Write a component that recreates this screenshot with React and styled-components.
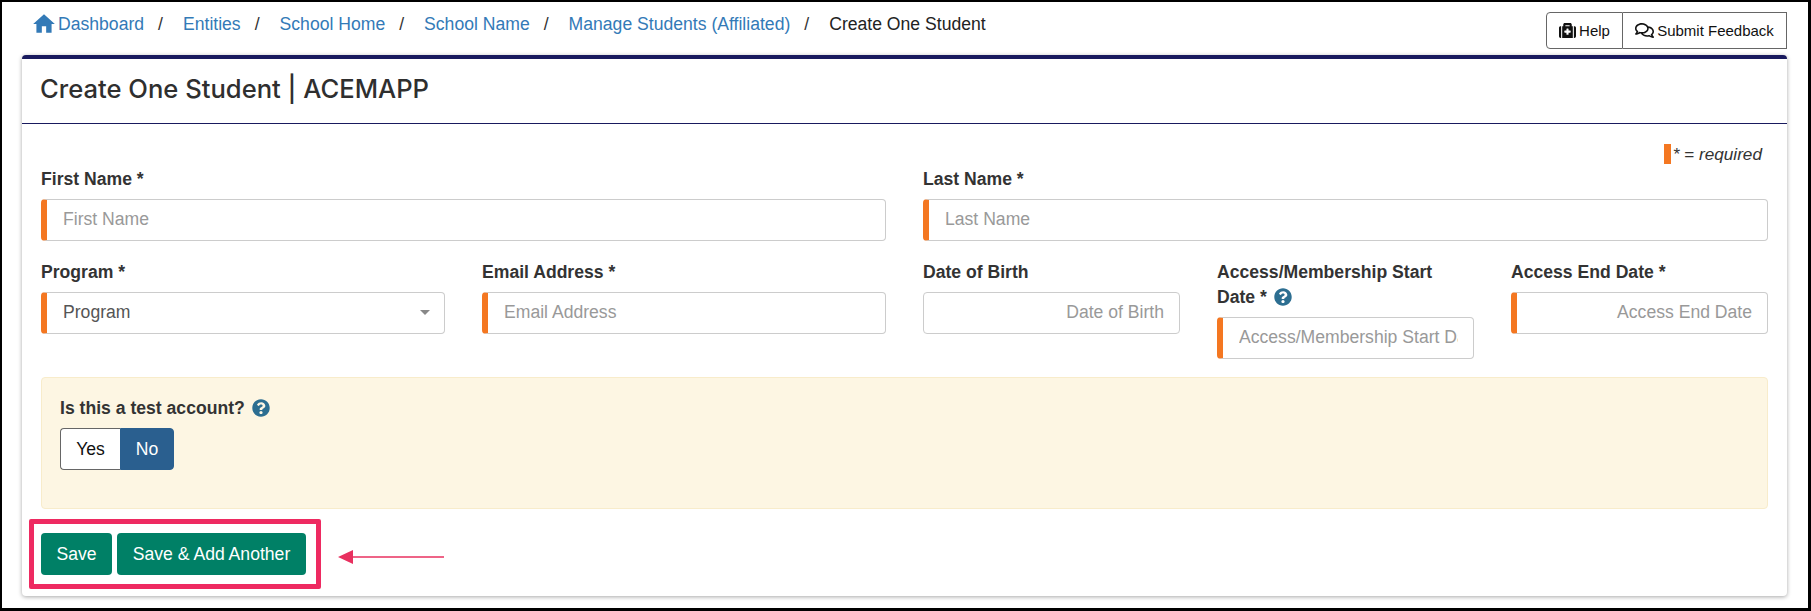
import React from 'react';
import styled, { createGlobalStyle } from 'styled-components';
import { FaMedkit, FaRegComments, FaQuestionCircle } from 'react-icons/fa';
import { MdHome } from 'react-icons/md';

const GlobalStyle = createGlobalStyle`
  html, body {
    margin: 0;
    padding: 0;
    background: #fff;
  }
  * {
    box-sizing: border-box;
  }
`;

const Frame = styled.div`
  width: 1811px;
  height: 611px;
  overflow: hidden;
  background: #fff;
  border: solid #000;
  border-width: 2px 3px 3px 2px;
  padding: 0 21px 0 20px;
  font-family: 'Liberation Sans', Arial, sans-serif;
  font-size: 17.6px;
  color: #333;
`;

const TopBar = styled.div`
  height: 53px;
  display: flex;
  justify-content: space-between;
  align-items: flex-start;
`;

const Crumbs = styled.nav`
  display: flex;
  align-items: center;
  height: 20px;
  margin-top: 12px;
  padding-left: 9px;
  line-height: 20px;
`;

const CrumbLink = styled.a`
  color: #337ab7;
  display: inline-flex;
  align-items: center;
  gap: 3px;
  svg {
    width: 26px;
    height: 26px;
    margin-right: -2px;
  }
`;

const Sep = styled.span`
  color: #333;
  padding: 0 20px 0 14px;
`;

const CrumbCurrent = styled.span`
  color: #222;
`;

const HelpGroup = styled.div`
  display: flex;
  height: 37px;
  margin-top: 10px;
  font-size: 15px;
  color: #111;
`;

const HelpButton = styled.div`
  display: flex;
  align-items: center;
  justify-content: center;
  gap: 3px;
  width: ${(props) => props.$width}px;
  border: 1px solid #666;
  border-left-width: ${(props) => (props.$first ? 1 : 0)}px;
  border-radius: ${(props) => (props.$first ? '4px 0 0 4px' : '0')};
  background: #fff;
  svg {
    width: ${(props) => (props.$first ? 17 : 19)}px;
    height: ${(props) => (props.$first ? 17 : 19)}px;
  }
`;

const Card = styled.section`
  height: 541px;
  background: #fff;
  border-top: 4px solid #191a5e;
  border-radius: 4px;
  box-shadow: 0 1px 4px rgba(0, 0, 0, 0.35);
  display: flex;
  flex-direction: column;
`;

const CardHeader = styled.header`
  height: 65px;
  display: flex;
  align-items: center;
  padding: 0 0 5px 18px;
  border-bottom: 1px solid #191a5e;
`;

const Title = styled.h1`
  margin: 0;
  font-family: Inter, 'Open Sans', sans-serif;
  font-size: 25.6px;
  font-weight: 500;
  color: #2f2f2f;
`;

const CardBody = styled.div`
  padding: 20px 19px 0;
  flex: 1;
`;

const RequiredNote = styled.div`
  display: flex;
  justify-content: flex-end;
  height: 20px;
  padding-right: 6px;
  font-size: 17.2px;
  font-style: italic;
  line-height: 20px;
  color: #333;
  span:first-child {
    width: 7px;
    background: #f47721;
    margin-right: 2px;
  }
`;

const Row = styled.div`
  display: grid;
  grid-template-columns: 1fr 1fr;
  column-gap: 37px;
  margin-top: ${(props) => props.$mt || 0}px;
  margin-bottom: ${(props) => props.$mb || 0}px;
`;

const SubRow = styled.div`
  display: grid;
  grid-template-columns: repeat(${(props) => props.$cols}, 1fr);
  column-gap: 37px;
  align-items: start;
`;

const FieldBox = styled.div`
  display: flex;
  flex-direction: column;
`;

const Label = styled.label`
  display: block;
  font-weight: 700;
  line-height: 25px;
  margin-bottom: 7px;
  color: #333;
  svg {
    width: 18px;
    height: 18px;
    color: #2c6e91;
    vertical-align: -3px;
    margin-left: 2px;
  }
`;

const Input = styled.input`
  display: block;
  width: 100%;
  height: 42px;
  padding: 0 15px 1px 16px;
  font: inherit;
  text-align: ${(props) => (props.$right ? 'right' : 'left')};
  color: #555;
  background: #fff;
  border: 1px solid #ccc;
  border-left: ${(props) => (props.$required ? '6px solid #f47721' : '1px solid #ccc')};
  border-radius: 4px;
  outline: none;
  &::placeholder {
    color: #999;
    opacity: 1;
  }
`;

const SelectBox = styled.div`
  display: flex;
  align-items: center;
  justify-content: space-between;
  height: 42px;
  padding: 0 14px 1px 16px;
  color: #555;
  background: #fff;
  border: 1px solid #ccc;
  border-left: 6px solid #f47721;
  border-radius: 4px;
  &::after {
    content: '';
    border-left: 5px solid transparent;
    border-right: 5px solid transparent;
    border-top: 5px solid #888;
  }
`;

const TestPanel = styled.div`
  height: 132px;
  margin-top: 18px;
  padding: 18px 18px;
  background: #fdf6e3;
  border: 1px solid #f8eccb;
  border-radius: 4px;
`;

const Toggle = styled.div`
  display: flex;
  height: 42px;
`;

const ToggleButton = styled.button`
  width: ${(props) => props.$width}px;
  font: inherit;
  padding: 0;
  color: ${(props) => (props.$active ? '#fff' : '#111')};
  background: ${(props) => (props.$active ? '#2a5f8f' : '#fff')};
  border: 1px solid ${(props) => (props.$active ? '#2a5f8f' : '#666')};
  border-right-width: ${(props) => (props.$active ? 1 : 0)}px;
  border-radius: ${(props) => (props.$active ? '0 4px 4px 0' : '4px 0 0 4px')};
`;

const ActionRow = styled.div`
  display: flex;
  align-items: center;
  margin: 10px 0 0 -12px;
`;

const Highlight = styled.div`
  display: flex;
  gap: 5px;
  width: 292px;
  height: 70px;
  padding: 9px 7px;
  border: 5px solid #ee2a61;
  border-radius: 2px;
`;

const SaveButton = styled.button`
  height: 42px;
  width: ${(props) => props.$width}px;
  padding: 0;
  font: inherit;
  color: #fff;
  background: #008066;
  border: none;
  border-radius: 4px;
`;

const Arrow = styled.svg`
  width: 107px;
  height: 16px;
  margin-left: 17px;
  margin-top: 6px;
`;

const App = () => (
  <>
    <GlobalStyle />
    <Frame>
      <TopBar>
        <Crumbs>
          <CrumbLink><MdHome />Dashboard</CrumbLink>
          <Sep>/</Sep>
          <CrumbLink>Entities</CrumbLink>
          <Sep>/</Sep>
          <CrumbLink>School Home</CrumbLink>
          <Sep>/</Sep>
          <CrumbLink>School Name</CrumbLink>
          <Sep>/</Sep>
          <CrumbLink>Manage Students (Affiliated)</CrumbLink>
          <Sep>/</Sep>
          <CrumbCurrent>Create One Student</CrumbCurrent>
        </Crumbs>
        <HelpGroup>
          <HelpButton $first $width={77}><FaMedkit />Help</HelpButton>
          <HelpButton $width={164}><FaRegComments />Submit Feedback</HelpButton>
        </HelpGroup>
      </TopBar>
      <Card>
        <CardHeader>
          <Title>Create One Student | ACEMAPP</Title>
        </CardHeader>
        <CardBody>
          <RequiredNote><span />
            <span>* = required</span>
          </RequiredNote>
          <Row $mt={3} $mb={19}>
            <FieldBox>
              <Label>First Name *</Label>
              <Input $required placeholder="First Name" />
            </FieldBox>
            <FieldBox>
              <Label>Last Name *</Label>
              <Input $required placeholder="Last Name" />
            </FieldBox>
          </Row>
          <Row>
            <SubRow $cols={2}>
              <FieldBox>
                <Label>Program *</Label>
                <SelectBox>Program</SelectBox>
              </FieldBox>
              <FieldBox>
                <Label>Email Address *</Label>
                <Input $required placeholder="Email Address" />
              </FieldBox>
            </SubRow>
            <SubRow $cols={3}>
              <FieldBox>
                <Label>Date of Birth</Label>
                <Input $right placeholder="Date of Birth" />
              </FieldBox>
              <FieldBox>
                <Label>Access/Membership Start Date * <FaQuestionCircle /></Label>
                <Input $required placeholder="Access/Membership Start Date" />
              </FieldBox>
              <FieldBox>
                <Label>Access End Date *</Label>
                <Input $required $right placeholder="Access End Date" />
              </FieldBox>
            </SubRow>
          </Row>
          <TestPanel>
            <Label>Is this a test account? <FaQuestionCircle /></Label>
            <Toggle>
              <ToggleButton $width={60}>Yes</ToggleButton>
              <ToggleButton $active $width={54}>No</ToggleButton>
            </Toggle>
          </TestPanel>
          <ActionRow>
            <Highlight>
              <SaveButton $width={71}>Save</SaveButton>
              <SaveButton $width={189}>Save &amp; Add Another</SaveButton>
            </Highlight>
            <Arrow viewBox="0 0 107 16">
              <path d="M0 8 L15 1 L15 15 Z" fill="#e8305f" />
              <path d="M14 8 H106" stroke="#e8305f" strokeWidth="1.5" />
            </Arrow>
          </ActionRow>
        </CardBody>
      </Card>
    </Frame>
  </>
);

export default App;
